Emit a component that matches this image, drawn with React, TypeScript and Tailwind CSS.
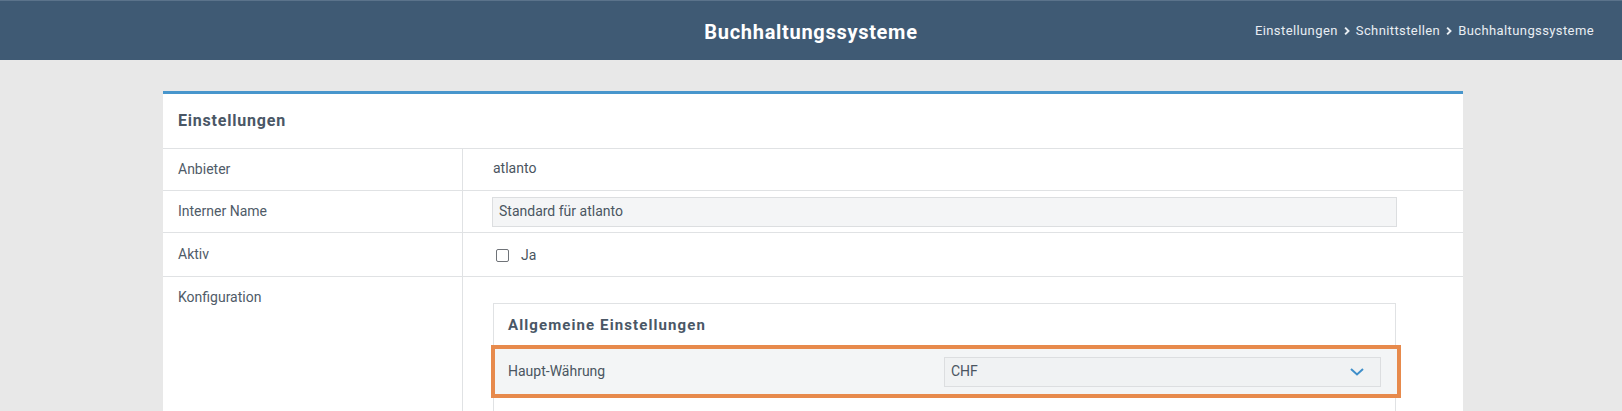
const Chevron = () => (
    <svg viewBox="0 0 8 12" className="w-[6px] h-[10px] mx-[6px]" fill="none" stroke="currentColor" strokeWidth="2.6">
        <path d="M1.5 1.5 6 6l-4.5 4.5" />
    </svg>
);

const Row = ({ label, children, className }: { label: string; children: React.ReactNode; className: string }) => (
    <div className={`flex border-b border-[#e0e2e4] ${className}`}>
        <div className="w-[300px] shrink-0 border-r border-[#e0e2e4] pl-[15px] flex items-center">{label}</div>
        <div className="flex-1 pl-[30px] flex items-center">{children}</div>
    </div>
);

export default function App() {
    return (
        <div className="min-h-[411px] bg-[#e8e8e8] font-['Roboto',sans-serif] text-[14px] text-[#4f5b68] overflow-hidden">
            <header className="h-[60px] bg-[#3f5a74] border-t border-[#5b738b] flex items-center relative">
                <h1 className="mx-auto text-white text-[20px] font-bold tracking-[0.7px] pt-[2px]">Buchhaltungssysteme</h1>
                <nav className="absolute right-[28px] top-[20px] flex items-center text-[13px] tracking-[0.4px] text-[#e9eef3]">
                    <span>Einstellungen</span>
                    <Chevron />
                    <span>Schnittstellen</span>
                    <Chevron />
                    <span>Buchhaltungssysteme</span>
                </nav>
            </header>

            <main className="pt-[31px]">
                <section className="ml-[163px] w-[1300px] bg-white border-t-[3px] border-[#4896cc]">
                    <div className="h-[55px] border-b border-[#e0e2e4] pl-[15px] flex items-center">
                        <h2 className="text-[16px] font-bold tracking-[0.8px] text-[#4a5766]">Einstellungen</h2>
                    </div>

                    <Row label="Anbieter" className="h-[42px]">
                        <span className="text-[#4a5561] -mt-[2px]">atlanto</span>
                    </Row>
                    <Row label="Interner Name" className="h-[42px]">
                        <div className="w-[905px] h-[30px] -ml-[1px] bg-[#f4f5f6] border border-[#dcdee0] pl-[6px] flex items-center text-[#4a5561]">
                            Standard für atlanto
                        </div>
                    </Row>
                    <Row label="Aktiv" className="h-[44px]">
                        <div className="flex items-center gap-[12px] pt-[2px] pl-[3px]">
                            <div className="w-[13px] h-[13px] rounded-[2px] border border-[#6f7378] bg-white" />
                            <span className="text-[#4a5561]">Ja</span>
                        </div>
                    </Row>

                    <div className="flex h-[140px]">
                        <div className="w-[300px] shrink-0 border-r border-[#e0e2e4] pl-[15px] pt-[10px] leading-[20px]">
                            Konfiguration
                        </div>
                        <div className="flex-1 pl-[30px] pt-[26px]">
                            <div className="w-[903px] border border-[#e0e2e4] bg-white">
                                <div className="h-[41px] pl-[14px] pt-[2px] flex items-center">
                                    <h3 className="text-[15px] font-bold tracking-[1.1px] text-[#4a5766]">Allgemeine Einstellungen</h3>
                                </div>
                                <div className="-ml-[3px] -mr-[6px] border-4 border-[#e78a4c] bg-[#f3f5f6] h-[53px] pl-[13px] pr-[16px] flex items-center justify-between">
                                    <span className="text-[#4a5561]">Haupt-Währung</span>
                                    <div className="w-[437px] h-[30px] border border-[#dcdee0] bg-[#f0f2f3] pl-[6px] pr-[16px] flex items-center justify-between text-[#4a5561]">
                                        <span>CHF</span>
                                        <svg viewBox="0 0 14 8" className="w-[14px] h-[8px]" fill="none" stroke="#3f8fca" strokeWidth="2">
                                            <path d="M1 1l6 5.5L13 1" />
                                        </svg>
                                    </div>
                                </div>
                                <div className="h-[20px]" />
                            </div>
                        </div>
                    </div>
                </section>
            </main>
        </div>
    );
}
